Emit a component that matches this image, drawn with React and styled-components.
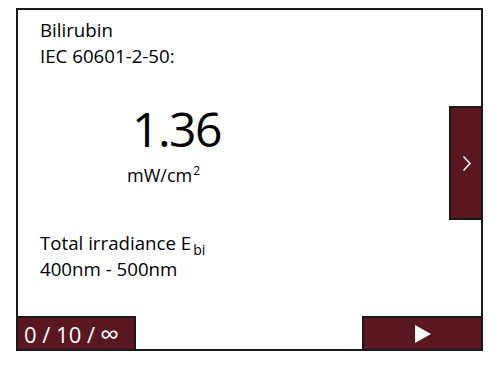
import React from "react";
import styled, { createGlobalStyle } from "styled-components";

const Global = createGlobalStyle`
  html, body { margin: 0; padding: 0; background: #ffffff; }
  body { font-family: "Open Sans", "DejaVu Sans", sans-serif; color: #000; }
`;

const MAROON = "#5a1720";

const Page = styled.div`
  width: 500px;
  height: 365px;
  padding: 8px 0 0 16px;
  box-sizing: border-box;
`;

const Frame = styled.div`
  width: 467px;
  height: 343px;
  box-sizing: border-box;
  border: 2px solid #1a1a1a;
  display: flex;
  flex-direction: column;
`;

const Main = styled.div`
  flex: 1;
  display: flex;
  min-height: 0;
`;

const Content = styled.div`
  flex: 1;
  padding: 7px 0 0 22px;
  display: flex;
  flex-direction: column;
`;

const Label = styled.div`
  font-size: 18.7px;
  line-height: 26px;
  margin-top: ${(p) => p.$top || 0}px;
  white-space: nowrap;
`;

const Value = styled.div`
  font-size: 48px;
  line-height: 48px;
  letter-spacing: -1.5px;
  margin-top: 36px;
  padding-left: ${(p) => p.$indent}px;
`;

const Unit = styled.div`
  font-size: 18px;
  line-height: 26px;
  margin-top: 9px;
  padding-left: ${(p) => p.$indent}px;
  sup {
    font-size: 12px;
    line-height: 0;
    vertical-align: 7px;
    margin-left: 1px;
  }
`;

const Sub = styled.sub`
  font-size: 14px;
  line-height: 0;
  vertical-align: -5px;
  margin-left: 2px;
`;

const SideRail = styled.div`
  width: 32px;
  display: flex;
  align-items: center;
`;

const SideButton = styled.div`
  width: 32px;
  height: 114px;
  box-sizing: border-box;
  background: ${MAROON};
  border: 2px solid #1a1a1a;
  border-right: none;
  display: flex;
  align-items: center;
  justify-content: center;
  padding-left: 2px;
`;

const Footer = styled.div`
  height: 33px;
  display: flex;
  justify-content: space-between;
`;

const FooterButton = styled.div`
  width: ${(p) => p.$w}px;
  height: 33px;
  box-sizing: border-box;
  background: ${MAROON};
  border-top: 2px solid #1a1a1a;
  ${(p) => (p.$side === "left" ? "border-right: 2px solid #1a1a1a;" : "border-left: 2px solid #1a1a1a;")}
  display: flex;
  align-items: center;
  justify-content: ${(p) => (p.$side === "left" ? "flex-start" : "center")};
  padding-left: ${(p) => (p.$side === "left" ? 6 : 0)}px;
  color: #ffffff;
  font-size: 22px;
  line-height: 22px;
  white-space: pre;
`;

const Infinity = styled.span`
  font-size: 27px;
  line-height: 0;
  margin-left: 5px;
`;

export default function App() {
  return (
    <>
      <Global />
      <Page>
        <Frame>
          <Main>
            <Content>
              <Label>Bilirubin</Label>
              <Label>IEC 60601-2-50:</Label>
              <Value $indent={92}>1.36</Value>
              <Unit $indent={87}>
                mW/cm<sup>2</sup>
              </Unit>
              <Label $top={42}>
                Total irradiance E<Sub>bi</Sub>
              </Label>
              <Label>400nm - 500nm</Label>
            </Content>
            <SideRail>
              <SideButton>
                <svg width="10" height="17" viewBox="0 0 10 17">
                  <polyline
                    points="1.5,1.5 8,8.5 1.5,15.5"
                    fill="none"
                    stroke="#ffffff"
                    strokeWidth="1.5"
                  />
                </svg>
              </SideButton>
            </SideRail>
          </Main>
          <Footer>
            <FooterButton $side="left" $w={118}>
              {"0 / 10 /"}
              <Infinity>∞</Infinity>
            </FooterButton>
            <FooterButton $side="right" $w={119}>
              <svg width="16" height="18" viewBox="0 0 16 18">
                <polygon points="0,0 16,9 0,18" fill="#ffffff" />
              </svg>
            </FooterButton>
          </Footer>
        </Frame>
      </Page>
    </>
  );
}
